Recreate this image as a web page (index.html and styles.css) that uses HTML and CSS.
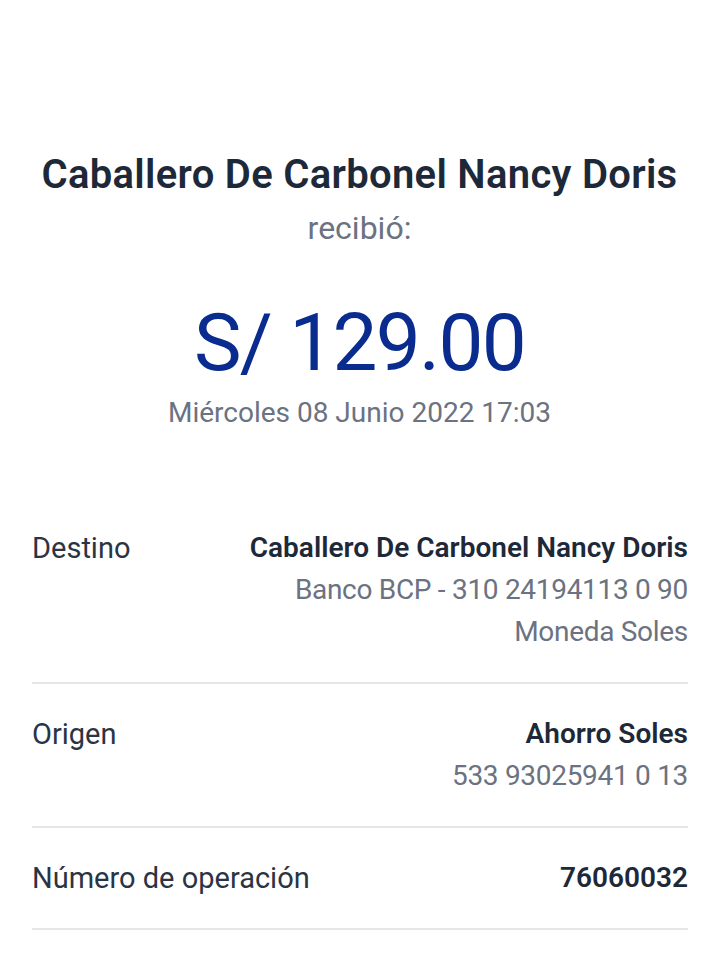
FILE: index.html
```html
<!DOCTYPE html>
<html lang="es">
<head>
<meta charset="utf-8">
<title>Constancia</title>
<link rel="stylesheet" href="styles.css">
</head>
<body>
<main class="receipt">
  <header class="summary">
    <h1 class="recipient">Caballero De Carbonel Nancy Doris</h1>
    <p class="received">recibió:</p>
    <p class="amount">S/ 129.00</p>
    <p class="date">Miércoles 08 Junio 2022 17:03</p>
  </header>
  <section class="details">
    <div class="row">
      <div class="label">Destino</div>
      <div class="values">
        <div class="strong">Caballero De Carbonel Nancy Doris</div>
        <div class="muted">Banco BCP - 310 24194113 0 90</div>
        <div class="muted">Moneda Soles</div>
      </div>
    </div>
    <div class="row">
      <div class="label">Origen</div>
      <div class="values">
        <div class="strong">Ahorro Soles</div>
        <div class="muted">533 93025941 0 13</div>
      </div>
    </div>
    <div class="row">
      <div class="label">Número de operación</div>
      <div class="values">
        <div class="strong">76060032</div>
      </div>
    </div>
  </section>
</main>
</body>
</html>
```
FILE: styles.css
```css
* { box-sizing: border-box; }
html, body { margin: 0; padding: 0; background: #ffffff; }
body {
  font-family: Roboto, "Noto Sans", sans-serif;
  color: #1e293b;
  width: 719px;
  height: 962px;
  overflow: hidden;
}
.receipt { display: flex; flex-direction: column; }
.summary {
  display: flex;
  flex-direction: column;
  align-items: center;
  padding-top: 149px;
  text-align: center;
}
.summary p, .summary h1 { margin: 0; }
.recipient {
  font-size: 40px;
  line-height: 52px;
  font-weight: 600;
  color: #1d2939;
  letter-spacing: 0.3px;
}
.received {
  font-size: 32px;
  line-height: 54px;
  color: #6b7281;
}
.amount {
  margin-top: 40px !important;
  font-size: 80px;
  line-height: 96px;
  font-weight: 400;
  color: #0a2c8f;
  letter-spacing: -1.7px;
}
.date {
  font-size: 28px;
  line-height: 44px;
  color: #6b7281;
}
.details {
  margin-top: 63px;
  padding: 0 31px 0 32px;
  display: flex;
  flex-direction: column;
}
.row {
  display: flex;
  justify-content: space-between;
  align-items: flex-start;
  padding: 29px 0 29px;
  border-bottom: 2px solid #e5e6e8;
  font-size: 28px;
  line-height: 42px;
}
.label { color: #2b3444; font-size: 29px; }
.values { text-align: right; }
.strong { font-weight: 600; color: #1d2939; }
.muted { color: #6b7281; letter-spacing: -0.3px; }
```
